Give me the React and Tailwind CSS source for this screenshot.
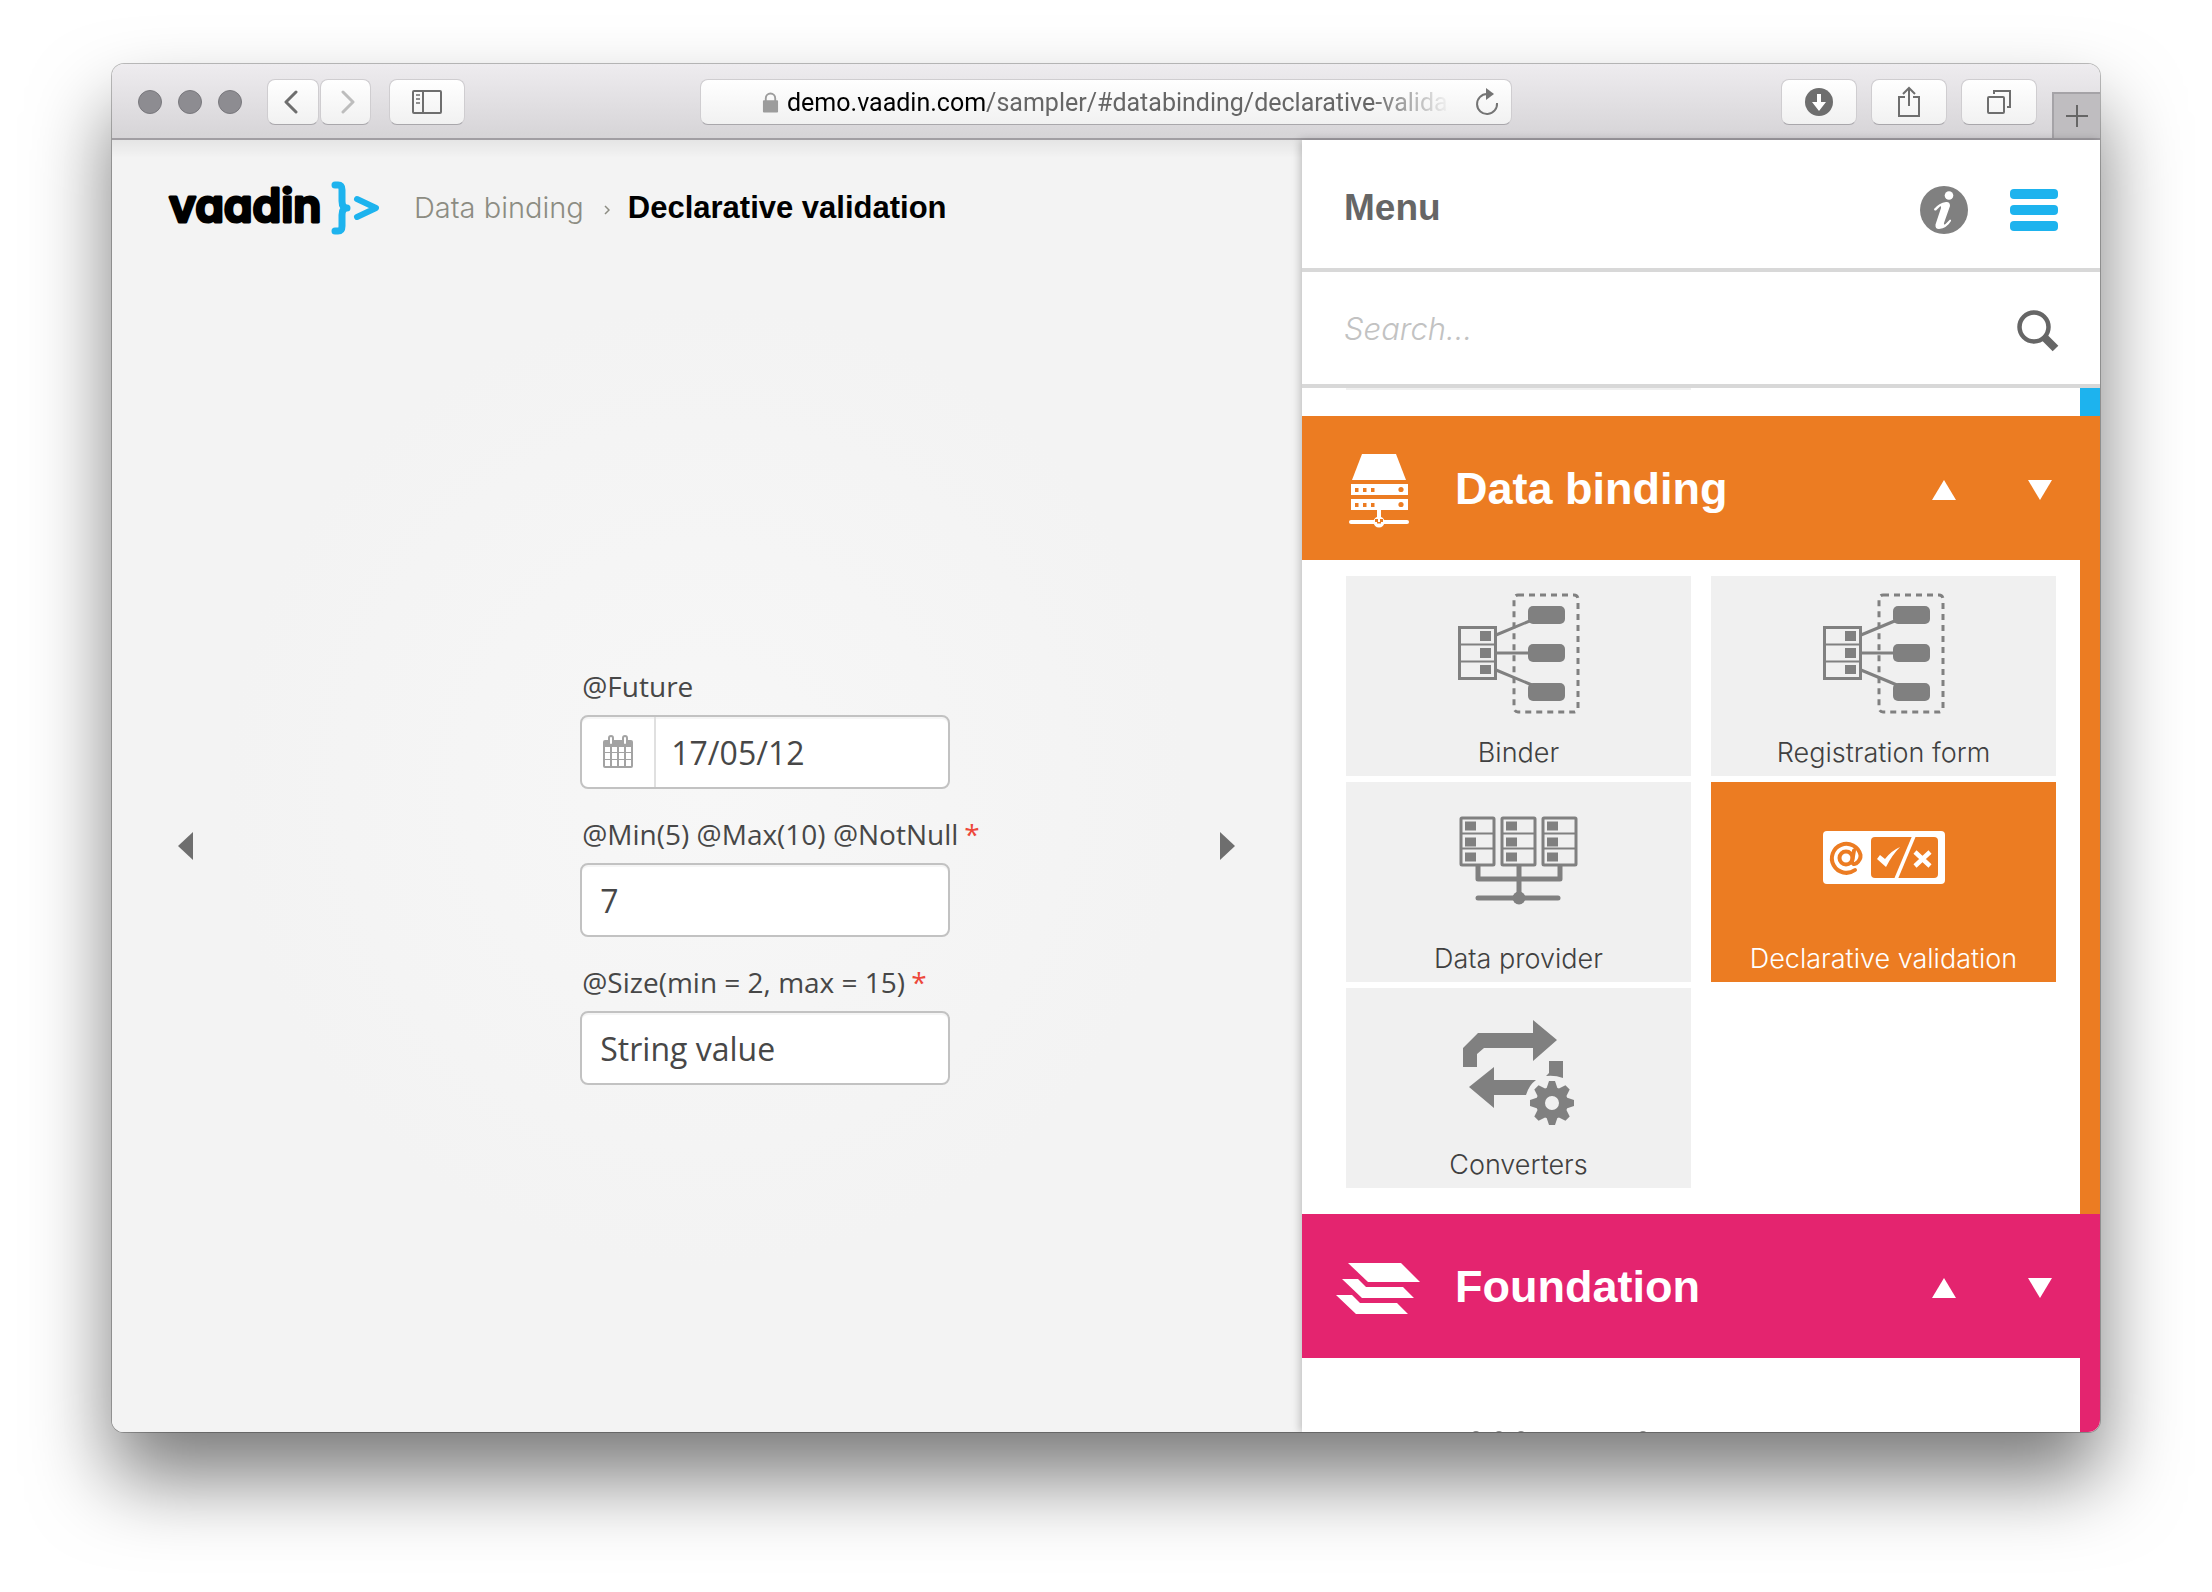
const GREY = '#808080'

function BinderIcon() {
  return (
    <svg width="122" height="122" viewBox="0 0 122 122" fill="none" stroke={GREY}>
      <rect x="56" y="2" width="64" height="117" rx="4" strokeWidth="3" strokeDasharray="6 5" />
      <path d="M38 42 L74 27 M38 60 H74 M38 77 L74 92" strokeWidth="3" />
      <rect x="1.500" y="34.500" width="36" height="51" strokeWidth="3" />
      <path d="M2 51.500 H38 M2 68.500 H38" strokeWidth="2" />
      <g fill={GREY} stroke="none">
        <rect x="22" y="38" width="11" height="10" />
        <rect x="22" y="55" width="11" height="10" />
        <rect x="22" y="72" width="11" height="9" />
        <rect x="70" y="13" width="37" height="18" rx="5" />
        <rect x="70" y="51" width="37" height="18" rx="5" />
        <rect x="70" y="90" width="37" height="18" rx="5" />
      </g>
    </svg>
  )
}

function ProviderIcon() {
  return (
    <svg width="122" height="122" viewBox="0 0 122 122" fill="none" stroke={GREY}>
      {[2, 43, 84].map((x) => (
        <g key={x}>
          <rect x={x + 1} y="19" width="33" height="47" rx="1" strokeWidth="3" />
          <path d={`M${x} 34.500 h34 M${x} 49.500 h34`} strokeWidth="2" />
          <rect x={x + 5} y="22.500" width="11" height="9" fill={GREY} stroke="none" />
          <rect x={x + 5} y="38.500" width="11" height="9" fill={GREY} stroke="none" />
          <rect x={x + 5} y="53.500" width="11" height="9" fill={GREY} stroke="none" />
        </g>
      ))}
      <path d="M20 66 V80 H102 V66 M61 66 V98" strokeWidth="5" strokeLinejoin="round" />
      <path d="M20 99 H100" strokeWidth="5" strokeLinecap="round" />
      <circle cx="61" cy="99" r="6.500" fill={GREY} stroke="none" />
    </svg>
  )
}

function ValidationIcon() {
  return (
    <svg width="122" height="122" viewBox="0 2 122 122">
      <rect x="0" y="34" width="122" height="53" rx="4" fill="#fff" />
      <rect x="48" y="40" width="67" height="41" rx="4" fill="#ec7c22" />
      <circle cx="23" cy="61" r="6.500" fill="none" stroke="#ec7c22" strokeWidth="4" />
      <path d="M31 53.500 L29 65 Q29.500 68 33 66.500 Q38 63 37.500 58 A14.500 14.500 0 1 0 32 73" fill="none" stroke="#ec7c22" strokeWidth="4" strokeLinecap="round" />
      <path d="M73 82 L91 39" stroke="#fff" strokeWidth="3.500" />
      <path d="M54 62 L57 58 L62 62 Q68 54 77 50 Q69 58 63 70 Z" fill="#fff" />
      <path d="M92 55 L107 69 M107 55 L92 69" stroke="#fff" strokeWidth="4.500" />
    </svg>
  )
}

function ConvertersIcon() {
  return (
    <svg width="122" height="122" viewBox="0 1 122 122" fill={GREY}>
      <path d="M5 63 V44 L20 29 H75 V16 L99 36 L75 57 V44 H26 L19 50 V63 Z" />
      <path d="M11 83 L36 63 V76 H78 Q71 81 68 91 H36 V104 Z" />
      <path d="M91 57 H105 V74 Q97 71 88 72 L91 69 Z" />
      <g transform="translate(94 99)">
        {[0, 45, 90, 135, 180, 225, 270, 315].map((a) => (
          <path key={a} d="M-6 -13 L-3 -22 H3 L6 -13 Z" transform={`rotate(${a})`} />
        ))}
        <path fillRule="evenodd" d="M0 -16 A16 16 0 1 1 0 16 A16 16 0 1 1 0 -16 Z M0 -7 A7 7 0 1 0 0 7 A7 7 0 1 0 0 -7 Z" />
      </g>
    </svg>
  )
}

function ServerIcon() {
  return (
    <svg width="62" height="76" viewBox="0 0 62 76" fill="#fff">
      <path d="M14 1 H48 L58 27 H4 Z" />
      <path d="M3 31 H60 V42 H3 Z M3 46 H60 V57 H3 Z" />
      <g fill="#ec7c22">
        {[7, 15, 23].map((x) => (
          <g key={x}>
            <rect x={x} y="35" width="3.500" height="4" />
            <rect x={x} y="50" width="3.500" height="4" />
          </g>
        ))}
        <circle cx="53" cy="36.500" r="2.600" />
        <circle cx="53" cy="51.500" r="2.600" />
      </g>
      <path d="M29 57 H33 V66 H29 Z" />
      <rect x="1" y="67" width="60" height="4" rx="2" />
      <circle cx="31" cy="69" r="5.500" />
      <path d="M27 66 h3 v3 h-3 Z M32 66 h3 v3 h-3 Z M29 69 h4 v1.500 h-4 Z" fill="#ec7c22" />
    </svg>
  )
}

function LayersIcon() {
  return (
    <svg width="86" height="52" viewBox="0 0 86 52" fill="#fff">
      <path d="M12 0 H65 L84 19 H32 Z" />
      <path d="M6 16 H22 L30 24 H67 L78 35 H26 Z" />
      <path d="M0 32 H16 L24 40 H61 L72 51 H20 Z" />
    </svg>
  )
}

function Tile({ icon, label, active }) {
  return (
    <button
      className={
        active
          ? 'flex h-[200px] flex-col items-center bg-[#ec7c22] pt-[17px] text-white'
          : 'flex h-[200px] flex-col items-center bg-[#f0f0f0] pt-[17px] text-[#404040]'
      }
    >
      {icon}
      <span className="mt-[18px] font-[Inter] text-[27px] leading-10 font-light">{label}</span>
    </button>
  )
}

function SectionHeader({ icon, title, className }) {
  return (
    <div className={`flex h-36 shrink-0 items-center pr-12 text-white ${className}`}>
      <div className="flex w-[153px] justify-center pt-[6px]">{icon}</div>
      <h2 className="flex-1 font-['Liberation_Sans'] text-[45px] leading-none font-bold">{title}</h2>
      <button aria-label="Previous section" className="mr-[72px] pt-1">
        <svg width="24" height="20" viewBox="0 0 24 20"><path d="M12 0 L24 20 H0 Z" fill="#fff" /></svg>
      </button>
      <button aria-label="Next section" className="pt-1">
        <svg width="24" height="20" viewBox="0 0 24 20"><path d="M0 0 H24 L12 20 Z" fill="#fff" /></svg>
      </button>
    </div>
  )
}

const toolButton =
  'flex h-[46px] items-center justify-center rounded-lg border border-[#cfcdd0] border-b-[#a9a7ab] bg-linear-to-b from-white to-[#f1f1f1]'

function Toolbar() {
  return (
    <header className="flex h-[76px] shrink-0 items-center border-b-2 border-[#a19ea3] bg-linear-to-b from-[#eeecef] to-[#d6d4d7] pt-[2px]">
      <div className="flex flex-1 items-center">
        <div className="ml-[26px] flex gap-4">
          <span className="size-6 rounded-full border border-[#79787d] bg-[#8d8c91]" />
          <span className="size-6 rounded-full border border-[#79787d] bg-[#8d8c91]" />
          <span className="size-6 rounded-full border border-[#79787d] bg-[#8d8c91]" />
        </div>
        <div className="ml-[25px] flex gap-px">
          <button aria-label="Back" className={`w-[52px] ${toolButton}`}>
            <svg width="14" height="24" viewBox="0 0 14 24" fill="none" stroke="#6e6e6e" strokeWidth="3" strokeLinecap="round" strokeLinejoin="round" className="mr-1"><path d="M12 2 L2 12 L12 22" /></svg>
          </button>
          <button aria-label="Forward" className={`w-[51px] ${toolButton}`}>
            <svg width="14" height="24" viewBox="0 0 14 24" fill="none" stroke="#bdbdbd" strokeWidth="3" strokeLinecap="round" strokeLinejoin="round" className="ml-1"><path d="M2 2 L12 12 L2 22" /></svg>
          </button>
        </div>
        <button aria-label="Show sidebar" className={`ml-[18px] w-[76px] ${toolButton}`}>
          <svg width="30" height="24" viewBox="0 0 30 24" fill="none" stroke="#6e6e6e" strokeWidth="2">
            <rect x="1" y="1" width="28" height="22" rx="1" />
            <path d="M11 1 V23" />
            <path d="M4 5 H8 M4 9 H8 M4 13 H8" strokeWidth="1.500" />
          </svg>
        </button>
      </div>
      <div className={`w-[812px] ${toolButton}`}>
        <svg width="17" height="21" viewBox="0 0 18 21" className="ml-[61px] shrink-0">
          <path d="M4 9 V6 a5 5 0 0 1 10 0 V9" fill="none" stroke="#9c9c9c" strokeWidth="2" />
          <rect x="1" y="8" width="16" height="13" rx="1" fill="#9c9c9c" />
        </svg>
        <div className="ml-2 flex-1 overflow-hidden pt-[2px] font-[Roboto] text-[25px] leading-8 whitespace-nowrap text-[#666] mask-r-from-88% mask-r-to-100%">
          <span className="text-black">demo.vaadin.com</span>/sampler/#databinding/declarative-valida
        </div>
        <button aria-label="Reload" className="mr-3 ml-6">
          <svg width="24" height="28" viewBox="0 0 24 28" fill="none" stroke="#747474" strokeWidth="2">
            <path d="M12 6 A10 10 0 1 0 22 15" />
            <path d="M11 0 L19 6 L11 12 Z" fill="#747474" stroke="none" />
          </svg>
        </button>
      </div>
      <div className="flex flex-1 items-center justify-end self-stretch">
        <div className="flex gap-[14px]">
          <button aria-label="Downloads" className={`w-[76px] ${toolButton}`}>
            <svg width="28" height="28" viewBox="0 0 28 28"><circle cx="14" cy="14" r="14" fill="#6e6e6e" /><path d="M12 6 h4 v8 h5 L14 23 L7 14 h5 Z" fill="#fff" /></svg>
          </button>
          <button aria-label="Share" className={`w-[76px] ${toolButton}`}>
            <svg width="24" height="32" viewBox="0 0 24 32" fill="none" stroke="#6e6e6e" strokeWidth="2"><path d="M8 11 H2 V30 H22 V11 H16 M12 20 V3 M6 8 L12 2 L18 8" /></svg>
          </button>
          <button aria-label="Show tabs" className={`w-[76px] ${toolButton}`}>
            <svg width="24" height="24" viewBox="0 0 24 24" fill="none" stroke="#6e6e6e" strokeWidth="2"><rect x="1" y="7" width="16" height="16" rx="1" /><path d="M7 4 V1 H23 V17 H20" /></svg>
          </button>
        </div>
        <button aria-label="New tab" className="ml-[15px] flex h-[46px] w-12 items-center justify-center self-end border-t-2 border-l-2 border-[#a5a3a7] bg-[#bfbdc0]">
          <svg width="22" height="22" viewBox="0 0 22 22" stroke="#666" strokeWidth="2"><path d="M11 0 V22 M0 11 H22" /></svg>
        </button>
      </div>
    </header>
  )
}

function Field({ id, label, required, children }) {
  return (
    <div className="flex flex-col">
      <label htmlFor={id} className="mb-[9px] ml-[2px] text-[28px] leading-10 whitespace-nowrap">
        {label}
        {required && <span className="ml-[6px] text-[#ed473b]">*</span>}
      </label>
      {children}
    </div>
  )
}

const box = 'h-[74px] w-[370px] rounded-lg border-2 border-[#c2c2c2] bg-white shadow-[inset_0_2px_0_#f5f5f5]'

function Demo() {
  return (
    <main className="flex min-w-0 flex-1 flex-col bg-[#f3f3f3] bg-[radial-gradient(circle_at_center,#f7f7f7_0,#f3f3f3_480px)]">
      <div className="h-[120px] shrink-0 bg-[linear-gradient(rgba(0,0,0,0.06),transparent_18px)] pt-4">
        <nav className="flex h-[104px] items-center pl-14 font-[Inter] text-[29px] leading-none">
          <a href="#home" aria-label="vaadin">
            <svg width="214" height="60" viewBox="0 -2 214 60" className="overflow-visible">
              <text x="1" y="42" fontFamily="Inter" fontWeight="600" fontSize="46" stroke="#000" strokeWidth="3" strokeLinejoin="round" style={{ fontFeatureSettings: '"cv11"' }}>vaadin</text>
              <g fill="none" stroke="#1db3ee" strokeLinecap="round" strokeLinejoin="round">
                <path d="M167 5 H170 Q174 5 174 10 V21 Q174 28 179 28 Q174 28 174 35 V46 Q174 51 170 51 H167" strokeWidth="7" />
                <path d="M189 19 L208 28 L189 37" strokeWidth="6" />
              </g>
            </svg>
          </a>
          <a href="#databinding" className="ml-8 pb-[2px] font-light text-[#8c8c82]">Data binding</a>
          <svg width="6" height="10" viewBox="0 0 6 10" className="mt-1 mr-[18px] ml-5" fill="none" stroke="#8c8c82" strokeWidth="1.500"><path d="M1 1 L5 5 L1 9" /></svg>
          <span className="pb-[2px] font-['Liberation_Sans'] text-[31px] leading-none font-bold text-black">Declarative validation</span>
        </nav>
      </div>
      <div className="flex flex-1 items-center justify-between pr-[66px] pl-[65px]">
        <button aria-label="Previous sample">
          <svg width="16" height="28" viewBox="0 0 16 28"><path d="M16 0 V28 L1 14 Z" fill="#6e6e6e" /></svg>
        </button>
        <form className="mt-[58px] ml-[147px] flex flex-col gap-[25px] font-['Open_Sans'] text-[#474747]">
          <Field id="future" label="@Future">
            <div className={`flex overflow-hidden ${box}`}>
              <button type="button" aria-label="Open calendar" className="flex w-[74px] items-center justify-center border-r-2 border-[#e0e0e0]">
                <svg width="30" height="33" viewBox="0 0 30 33">
                  <rect x="0" y="5" width="30" height="28" rx="2" fill="#a3a3a3" />
                  <path d="M2 12 h5 v5 h-5 Z M9 12 h5 v5 h-5 Z M16 12 h5 v5 h-5 Z M23 12 h5 v5 h-5 Z M2 18 h5 v6 h-5 Z M9 18 h5 v6 h-5 Z M16 18 h5 v6 h-5 Z M23 18 h5 v6 h-5 Z M2 25 h5 v6 h-5 Z M9 25 h5 v6 h-5 Z M16 25 h5 v6 h-5 Z M23 25 h5 v6 h-5 Z" fill="#fff" />
                  <g fill="#fff" stroke="#a3a3a3" strokeWidth="2"><rect x="6" y="1" width="4" height="9" rx="2" /><rect x="20" y="1" width="4" height="9" rx="2" /></g>
                </svg>
              </button>
              <input id="future" defaultValue="17/05/12" className="w-0 flex-1 bg-transparent px-[15px] pt-[2px] text-[32px] outline-none" />
            </div>
          </Field>
          <Field id="min" label="@Min(5) @Max(10) @NotNull" required>
            <input id="min" defaultValue="7" className={`px-[18px] pt-[2px] text-[32px] outline-none ${box}`} />
          </Field>
          <Field id="size" label="@Size(min = 2, max = 15)" required>
            <input id="size" defaultValue="String value" className={`px-[18px] pt-[2px] text-[32px] outline-none ${box}`} />
          </Field>
        </form>
        <button aria-label="Next sample">
          <svg width="16" height="28" viewBox="0 0 16 28"><path d="M0 0 V28 L15 14 Z" fill="#6e6e6e" /></svg>
        </button>
      </div>
    </main>
  )
}

function Menu() {
  return (
    <aside className="z-10 flex w-[798px] shrink-0 flex-col bg-white shadow-[-2px_0_8px_rgba(0,0,0,0.22)]">
      <div className="flex h-[132px] shrink-0 items-center border-b-4 border-[#d8d8d8] pr-[42px] pl-[42px]">
        <h1 className="flex-1 pt-2 font-['Liberation_Sans'] text-[37px] font-bold text-[#666]">Menu</h1>
        <button aria-label="Information" className="mt-3 mr-[42px]">
          <svg width="48" height="48" viewBox="0 0 48 48">
            <circle cx="24" cy="24" r="24" fill="#808080" />
            <circle cx="29" cy="9.500" r="4.300" fill="#fff" />
            <path d="M14 23 Q19 17 26 16 Q30 15.500 30 20 L24 37 Q23.500 39.500 25.500 38 L30 33.500 Q31.500 33.500 31 35 Q27 42 19 43 Q15 43 15.500 38.500 L21 22 Q21.500 19.500 20 20.500 L16 24.500 Q14 25 14 23 Z" fill="#fff" />
          </svg>
        </button>
        <button aria-label="Toggle menu" className="mt-3">
          <svg width="48" height="42" viewBox="0 0 48 42" fill="#1db3ee"><rect width="48" height="10" rx="4" /><rect y="16" width="48" height="10" rx="4" /><rect y="32" width="48" height="10" rx="4" /></svg>
        </button>
      </div>
      <div className="flex h-[116px] shrink-0 items-center border-b-4 border-[#d8d8d8] pt-[3px] pr-[41px] pl-[42px]">
        <input type="search" aria-label="Search" placeholder="Search..." className="w-0 flex-1 font-[Inter] text-[31px] font-light italic outline-none placeholder:text-[#c2c2c2]" />
        <button aria-label="Search" className="pt-[3px]">
          <svg width="42" height="42" viewBox="0 0 42 42" fill="none" stroke="#666"><circle cx="17" cy="17" r="14.500" strokeWidth="4.500" /><path d="M27 27 L38.500 38.500" strokeWidth="8" strokeLinejoin="round" /></svg>
        </button>
      </div>
      <div className="flex min-h-0 flex-1 flex-col overflow-hidden">
        <div className="h-7 shrink-0 border-r-20 border-[#1db3ee] pl-11">
          <div className="h-[2px] w-[345px] bg-[#f0f0f0]" />
        </div>
        <SectionHeader icon={<ServerIcon />} title="Data binding" className="bg-[#ec7c22]" />
        <div className="grid shrink-0 grid-cols-2 gap-x-5 gap-y-[6px] border-r-20 border-[#ec7c22] pt-4 pr-6 pb-[26px] pl-11">
          <Tile icon={<BinderIcon />} label="Binder" />
          <Tile icon={<BinderIcon />} label="Registration form" />
          <Tile icon={<ProviderIcon />} label="Data provider" />
          <Tile icon={<ValidationIcon />} label="Declarative validation" active />
          <Tile icon={<ConvertersIcon />} label="Converters" />
        </div>
        <SectionHeader icon={<LayersIcon />} title="Foundation" className="bg-[#e4246f]" />
        <div className="flex flex-1 flex-col justify-end border-r-20 border-[#e4246f] pl-[170px]">
          <svg width="176" height="1" viewBox="0 0 176 1" fill="#888">
            <circle cx="4" cy="4" r="4" />
            <circle cx="27" cy="4" r="4" />
            <circle cx="49" cy="4" r="4" />
            <circle cx="171" cy="4" r="4" />
          </svg>
        </div>
      </div>
    </aside>
  )
}

export default function App() {
  return (
    <div className="flex h-screen flex-col overflow-hidden bg-white px-28 pt-16 pb-40">
      <div className="flex min-h-0 flex-1 flex-col overflow-hidden rounded-xl shadow-[0_0_0_1px_rgba(0,0,0,0.25),0_46px_80px_rgba(0,0,0,0.52)]">
        <Toolbar />
        <div className="flex min-h-0 flex-1">
          <Demo />
          <Menu />
        </div>
      </div>
    </div>
  )
}
